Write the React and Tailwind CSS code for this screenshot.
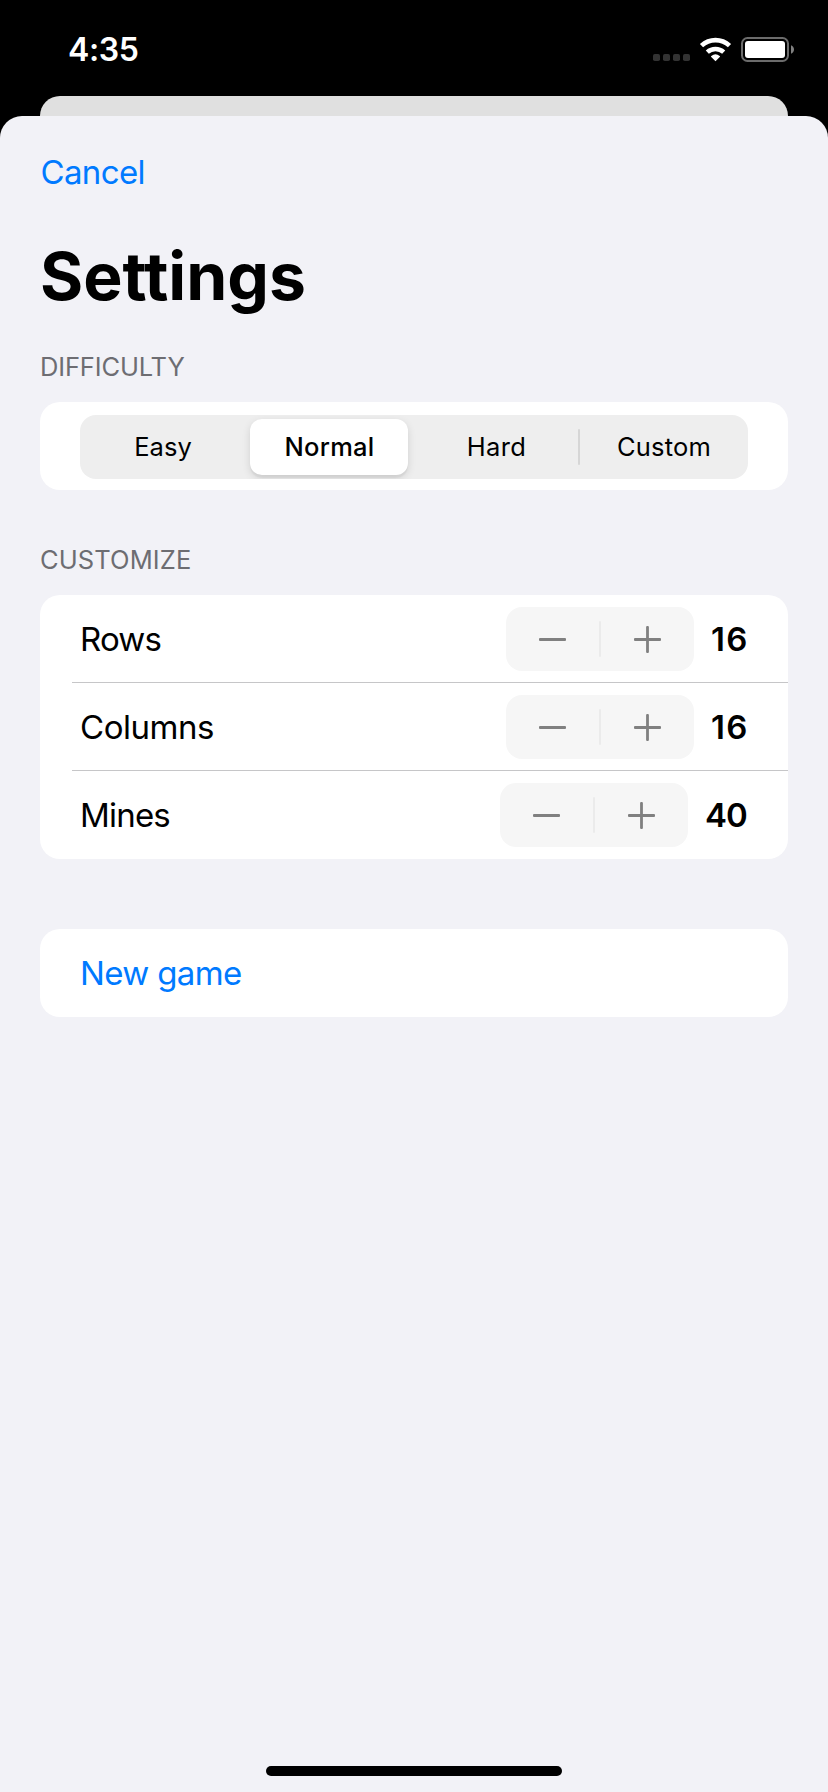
import React from "react";

function StatusBar() {
  return (
    <div className="flex h-24 items-start justify-between pl-[68px] pr-[34px] pt-[37px] text-white">
      <span className="-mt-[3px] text-[32px] font-semibold leading-[32px] tracking-[-0.4px]">4:35</span>
      <svg width="142" height="26" viewBox="652 37 142 26" fill="#fff">
        <g fill="#333">
          <rect x="653" y="54" width="7" height="7" rx="1.8" />
          <rect x="663" y="54" width="7" height="7" rx="1.8" />
          <rect x="673" y="54" width="7" height="7" rx="1.8" />
          <rect x="683" y="54" width="7" height="7" rx="1.8" />
        </g>
        <path d="M715.5 61.2 L711 56.7 Q710.8 56.3 711.3 55.9 Q715.5 52.6 719.7 55.9 Q720.2 56.3 720 56.7 Z" />
        <path d="M707.3 52.1 A12.3 12.3 0 0 1 723.7 52.1" fill="none" stroke="#fff" strokeWidth="4.6" />
        <path d="M701.5 45.7 A20.4 20.4 0 0 1 729.5 45.7" fill="none" stroke="#fff" strokeWidth="4.6" />
        <rect x="742" y="38" width="46" height="23" rx="5.5" fill="none" stroke="#6b6b6b" strokeWidth="2" />
        <rect x="745" y="41" width="40" height="17" rx="3" />
        <path d="M791 45.2 Q794 46.6 794 49.5 Q794 52.4 791 53.8 Z" fill="#808080" />
      </svg>
    </div>
  );
}

function SectionTitle({ children, className }) {
  return (
    <h2 className={"h-[30px] text-[25.5px] leading-[30px] text-[#6d6d72] " + className}>
      {children}
    </h2>
  );
}

function Difficulty() {
  return (
    <div className="mt-[20px] h-[88px] rounded-[20px] bg-white px-10 pt-[13px]">
      <div className="flex h-16 items-center overflow-hidden rounded-[16px] bg-[#eeeeee] text-[25.5px] leading-[56px]">
        <button className="w-[166px] text-center">
          <span>Easy</span>
        </button>
        <button className="ml-1 h-14 w-[158px] rounded-[12px] bg-white pl-px text-center font-medium tracking-[0.25px] shadow-[0_3px_8px_rgba(0,0,0,0.12),0_3px_1px_rgba(0,0,0,0.04)]">
          <span>Normal</span>
        </button>
        <button className="ml-[5px] w-[165px] pl-[2px] text-center tracking-[0.3px]">
          <span>Hard</span>
        </button>
        <div className="h-9 w-[2px] rounded-full bg-[#d6d6d6]" />
        <button className="flex-1 text-center tracking-[0.2px]">
          <span>Custom</span>
        </button>
      </div>
    </div>
  );
}

function Stepper() {
  return (
    <div className="flex h-16 w-[188px] items-center rounded-[16px] bg-[#f6f6f6]">
      <button className="flex w-[93px] justify-center" aria-label="Decrease">
        <svg width="27" height="27" viewBox="0 0 27 27" fill="#808080">
          <rect y="12.1" width="27" height="2.8" rx="1" />
        </svg>
      </button>
      <div className="h-9 w-[2px] rounded-full bg-[#ebebeb]" />
      <button className="flex w-[93px] justify-center" aria-label="Increase">
        <svg width="27" height="27" viewBox="0 0 27 27" fill="#808080">
          <rect y="12.1" width="27" height="2.8" rx="1" />
          <rect x="12.1" width="2.8" height="27" rx="1" />
        </svg>
      </button>
    </div>
  );
}

function Row({ label, value, last, labelClass, valueClass }) {
  return (
    <div className="ml-8 h-[88px]">
      <div
        className={
          "flex h-[88px] items-start pl-2 pr-10 pt-3 " + (last ? "" : "border-b border-[#c6c6c8]")
        }
      >
        <span className={"flex-1 text-[33px] leading-[64px] " + labelClass}>{label}</span>
        <Stepper />
        <span className={"pl-[17px] text-left text-[33px] font-semibold leading-[64px] " + valueClass}>
          {value}
        </span>
      </div>
    </div>
  );
}

export default function App() {
  return (
    <div className="flex h-[1792px] w-[828px] flex-col bg-black font-['Inter','Liberation_Sans',sans-serif] text-black">
      <StatusBar />
      <div className="mx-10 h-5 shrink-0 rounded-t-[20px] bg-[#e0e0e0]" />
      <div className="flex flex-1 flex-col rounded-t-[22px] bg-[#f2f2f7] px-10">
        <div className="mt-[36px] h-10 pl-[0.5px]">
          <button className="text-[33px] leading-10 tracking-[-0.65px] text-[#007aff]">Cancel</button>
        </div>
        <h1 className="mt-[44px] h-20 text-[66px] font-bold leading-[80px] tracking-[-0.05px]">Settings</h1>
        <SectionTitle className="mt-[36px] tracking-[-0.15px]">DIFFICULTY</SectionTitle>
        <Difficulty />
        <SectionTitle className="mt-[55px] tracking-[0.1px]">CUSTOMIZE</SectionTitle>
        <div className="mt-[20px] rounded-[20px] bg-white">
          <Row label="Rows" value="16" labelClass="tracking-[-0.85px]" valueClass="w-[54px] tracking-[1.4px]" />
          <Row label="Columns" value="16" labelClass="tracking-[-0.45px]" valueClass="w-[54px] tracking-[1.4px]" />
          <Row label="Mines" value="40" last labelClass="tracking-[-0.8px]" valueClass="w-[60px] tracking-[-0.9px]" />
        </div>
        <div className="mt-[70px] h-[88px] rounded-[20px] bg-white px-10">
          <button className="text-[33px] leading-[88px] tracking-[-0.65px] text-[#007aff]">New game</button>
        </div>
        <div className="mx-auto mb-4 mt-auto h-[10px] w-[296px] rounded-full bg-black" />
      </div>
    </div>
  );
}
